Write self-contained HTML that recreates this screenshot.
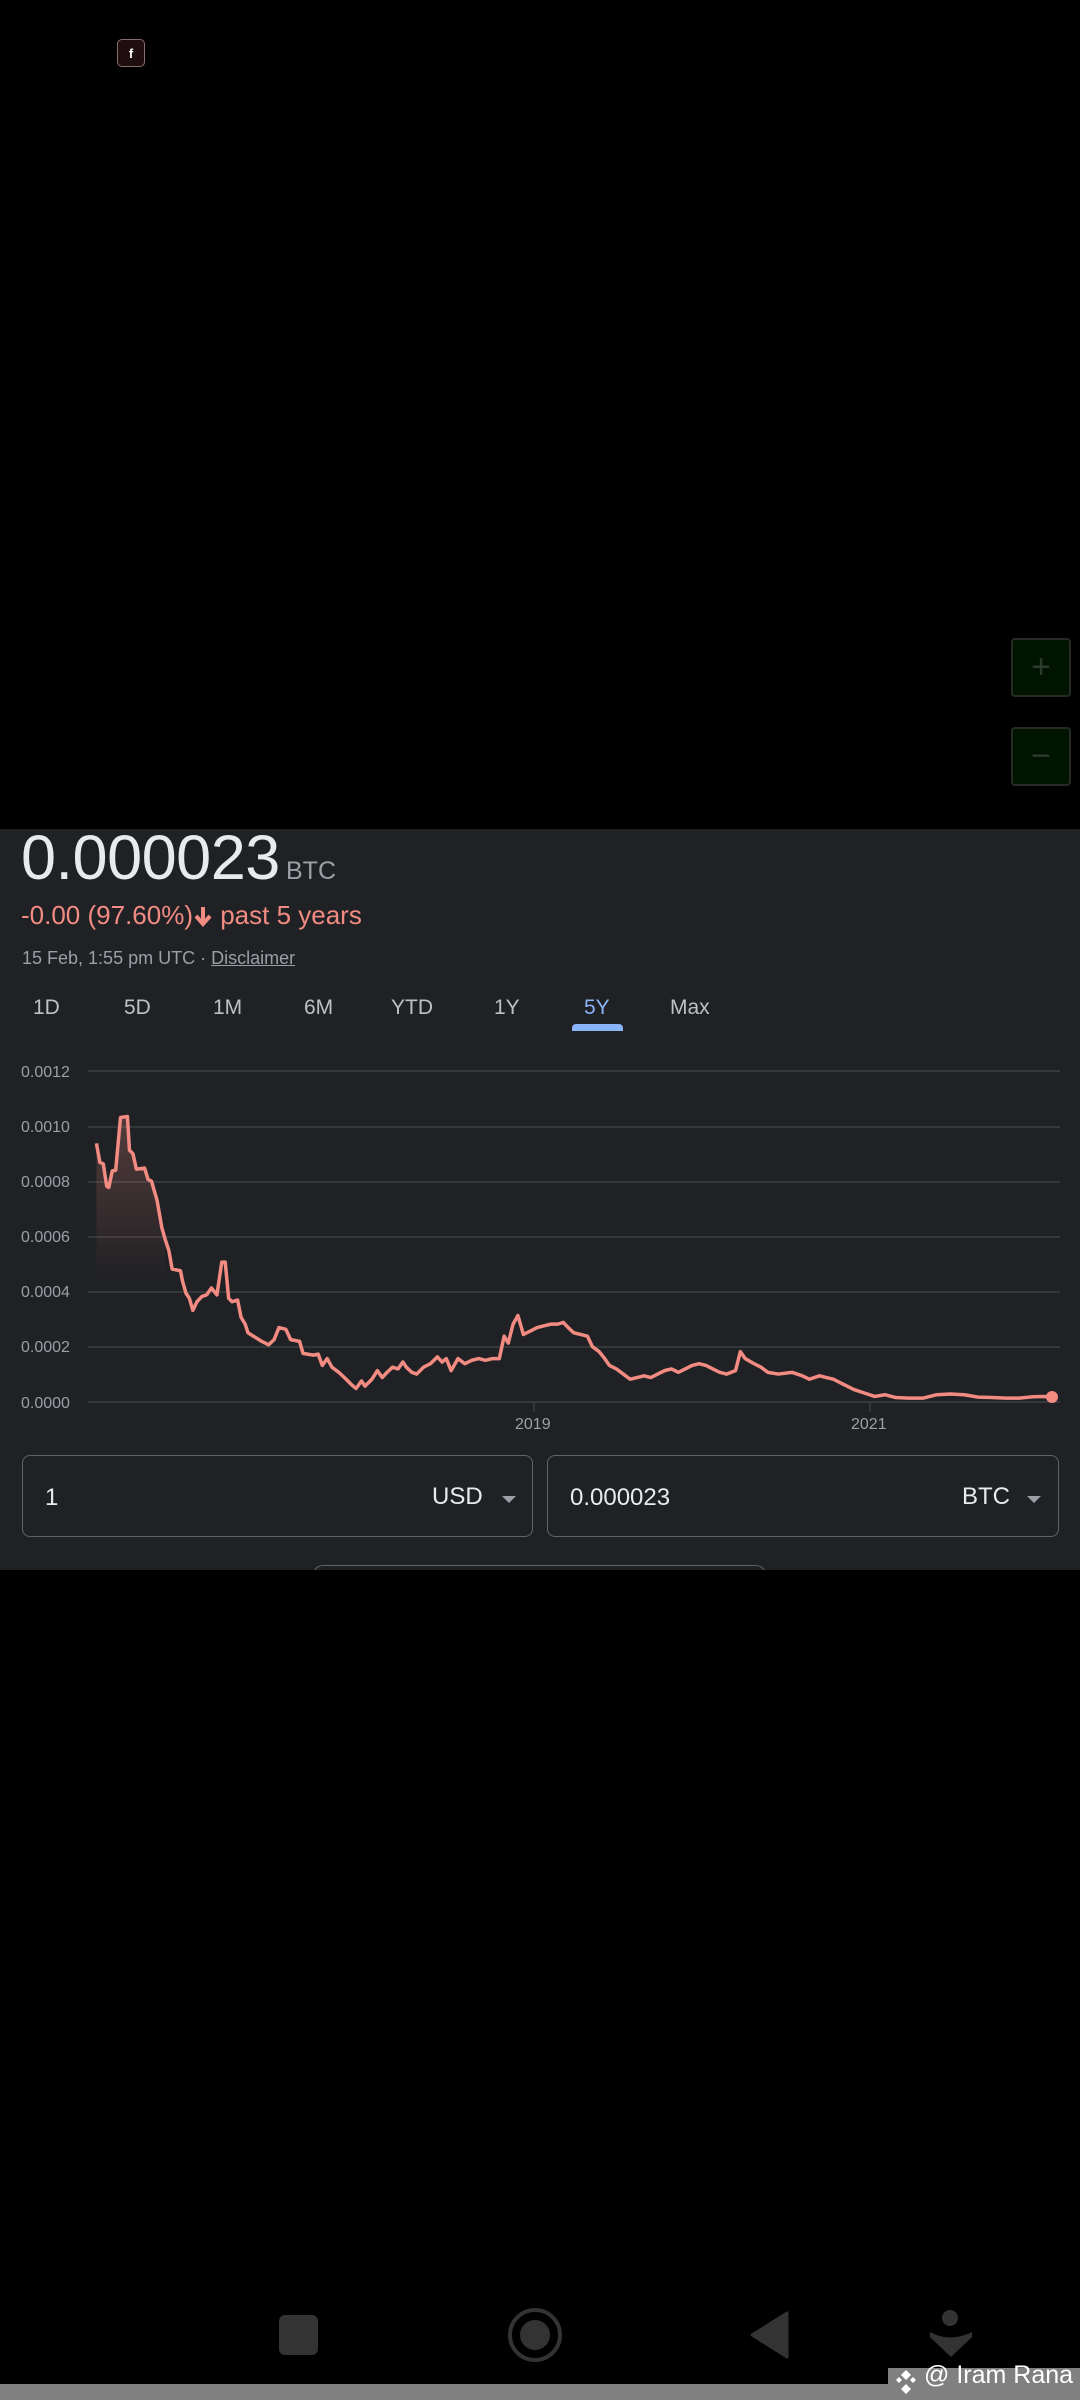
<!DOCTYPE html>
<html><head><meta charset="utf-8"><style>
html,body{margin:0;padding:0;background:#000;width:1080px;height:2400px;overflow:hidden;font-family:"Liberation Sans",Arial,sans-serif}
.a{position:absolute;white-space:nowrap}
.panel{position:absolute;left:0;top:829px;width:1080px;height:741px;background:#202124}
.tab{position:absolute;top:996px;font-size:21px;color:#bdc1c6}
.lbl{position:absolute;left:21px;font-size:16px;color:#9aa0a6}
.box{position:absolute;top:1455px;height:82px;border:1.5px solid #5f6368;border-radius:8px;box-sizing:border-box}
</style></head><body>
<div class="a" style="left:117px;top:39px;width:26px;height:26px;border:1.5px solid #8a6a6a;border-radius:5px;background:#1e0e10;color:#fff;font-size:13px;font-weight:bold;text-align:center;line-height:27px">f</div>
<div class="a" style="left:1011px;top:638px;width:60px;height:59px;border:2px solid #262b26;border-radius:4px;background:#001400;box-sizing:border-box;color:#2f3a2f;font-size:34px;text-align:center;line-height:54px">+</div>
<div class="a" style="left:1011px;top:727px;width:60px;height:59px;border:2px solid #262b26;border-radius:4px;background:#001400;box-sizing:border-box;color:#2f3a2f;font-size:34px;text-align:center;line-height:54px">−</div>

<div class="panel"></div>
<div class="a" style="left:21px;top:822px;font-size:63px;color:#e8eaed;letter-spacing:-0.5px">0.000023</div>
<div class="a" style="left:286px;top:857px;font-size:25px;color:#9aa0a6">BTC</div>
<div class="a" style="left:21px;top:900px;font-size:26px;color:#f28b82">-0.00 (97.60%)<svg width="20" height="22" viewBox="0 0 20 22" style="vertical-align:-3px"><path d="M10 2 V18 M3 11 L10 19 L17 11" fill="none" stroke="#f28b82" stroke-width="4"/></svg> past 5 years</div>
<div class="a" style="left:22px;top:948px;font-size:18px;color:#9aa0a6">15 Feb, 1:55 pm UTC · <span style="text-decoration:underline">Disclaimer</span></div>
<div class="tab" style="left:33px">1D</div>
<div class="tab" style="left:124px">5D</div>
<div class="tab" style="left:213px">1M</div>
<div class="tab" style="left:304px">6M</div>
<div class="tab" style="left:391px">YTD</div>
<div class="tab" style="left:494px">1Y</div>
<div class="tab" style="left:584px;color:#8ab4f8">5Y</div>
<div class="tab" style="left:670px">Max</div>
<div class="a" style="left:572px;top:1024px;width:51px;height:7px;background:#8ab4f8;border-radius:4px 4px 0 0"></div>

<div class="lbl" style="top:1064px">0.0012</div>
<div class="lbl" style="top:1119px">0.0010</div>
<div class="lbl" style="top:1174px">0.0008</div>
<div class="lbl" style="top:1229px">0.0006</div>
<div class="lbl" style="top:1284px">0.0004</div>
<div class="lbl" style="top:1339px">0.0002</div>
<div class="lbl" style="top:1395px">0.0000</div>
<div class="lbl" style="left:515px;top:1416px">2019</div>
<div class="lbl" style="left:851px;top:1416px">2021</div>

<svg class="a" style="left:0;top:0" width="1080" height="2400">
<defs><linearGradient id="g" x1="0" y1="0" x2="0" y2="1"><stop offset="0" stop-color="#f28b82" stop-opacity="0.25"/><stop offset="1" stop-color="#f28b82" stop-opacity="0"/></linearGradient></defs>
<g stroke="#3c4043" stroke-width="1.5">
<line x1="88" y1="1071" x2="1060" y2="1071"/><line x1="88" y1="1127" x2="1060" y2="1127"/><line x1="88" y1="1182" x2="1060" y2="1182"/><line x1="88" y1="1237" x2="1060" y2="1237"/><line x1="88" y1="1292" x2="1060" y2="1292"/><line x1="88" y1="1347" x2="1060" y2="1347"/><line x1="88" y1="1402" x2="1060" y2="1402"/>
<line x1="534" y1="1402" x2="534" y2="1412"/><line x1="870" y1="1402" x2="870" y2="1412"/>
</g>
<g transform="translate(0,1040) scale(0.6887,0.3444)">
<polygon fill="url(#g)" points="140,300 145,355 150,360 155,425 158,428 163,380 168,378 172,290 175,225 185,222 188,320 193,330 198,375 210,372 215,405 220,410 228,465 235,545 240,580 240,700 140,700"/>
<polyline fill="none" stroke="#f28b82" stroke-width="3.5" vector-effect="non-scaling-stroke" stroke-linejoin="round" points="140,300 145,355 150,360 155,425 158,428 163,380 168,378 172,290 175,225 185,222 188,320 193,330 198,375 210,372 215,405 220,410 228,465 235,545 240,580 245,610 250,665 262,670 265,700 270,735 275,750 280,785 286,760 293,745 300,740 307,720 315,740 322,645 327,645 332,750 337,760 345,755 350,805 356,825 360,850 372,865 380,875 390,885 398,870 405,835 415,840 422,870 435,875 440,910 455,915 462,912 468,945 475,925 482,950 492,965 500,980 510,1000 517,1012 525,990 530,1005 540,985 548,960 555,980 562,965 570,950 578,955 585,935 590,950 598,965 605,970 615,950 625,940 635,920 642,935 648,925 655,960 665,925 675,940 685,930 695,925 705,930 715,925 725,925 732,860 738,880 745,825 752,800 760,855 770,845 780,835 790,830 800,825 810,825 818,820 825,835 833,850 843,855 853,860 860,890 870,905 878,925 885,945 895,955 905,970 915,985 925,980 935,975 945,980 955,970 965,960 975,955 985,965 995,955 1005,945 1015,940 1025,945 1035,955 1045,965 1055,970 1068,960 1075,905 1082,925 1095,940 1105,950 1115,965 1130,970 1150,965 1165,975 1175,985 1190,975 1200,980 1210,985 1225,1000 1240,1015 1255,1025 1270,1035 1285,1030 1300,1038 1320,1040 1340,1040 1360,1030 1380,1028 1400,1030 1420,1037 1440,1038 1460,1040 1480,1040 1500,1036 1515,1035 1528,1036"/>
</g>
<circle cx="1052" cy="1397" r="6" fill="#f28b82"/>
<rect x="279" y="2315" width="39" height="40" rx="6" fill="#333"/>
<circle cx="535" cy="2335" r="25" fill="none" stroke="#333" stroke-width="4"/>
<circle cx="535" cy="2335" r="15" fill="#333"/>
<path d="M787 2313 L787 2357 L752 2335 Z" fill="#333" stroke="#333" stroke-width="3" stroke-linejoin="round"/>
<circle cx="950" cy="2318" r="8" fill="#333"/>
<path d="M930 2332 Q950 2343 972 2332 L972 2337 L951 2357 L930 2337 Z" fill="#333"/>
<rect x="0" y="2384" width="1080" height="16" fill="#808080"/>
<rect x="888" y="2368" width="192" height="16" fill="#808080"/>
<g fill="#fff"><path d="M906 2370 l5 5 -5 5 -5 -5z"/><path d="M899 2377 l3 3 -3 3 -3 -3z"/><path d="M913 2377 l3 3 -3 3 -3 -3z"/><path d="M906 2384 l5 5 -5 5 -5 -5z"/></g>
</svg>
<div class="box" style="left:22px;width:511px"></div>
<div class="box" style="left:547px;width:512px"></div>
<div class="a" style="left:45px;top:1484px;font-size:24px;color:#e8eaed">1</div>
<div class="a" style="left:432px;top:1483px;font-size:24px;color:#e8eaed">USD</div>
<div class="a" style="left:502px;top:1496px;width:0;height:0;border-left:7px solid transparent;border-right:7px solid transparent;border-top:7px solid #9aa0a6"></div>
<div class="a" style="left:570px;top:1484px;font-size:24px;color:#e8eaed">0.000023</div>
<div class="a" style="left:962px;top:1483px;font-size:24px;color:#e8eaed">BTC</div>
<div class="a" style="left:1027px;top:1496px;width:0;height:0;border-left:7px solid transparent;border-right:7px solid transparent;border-top:7px solid #9aa0a6"></div>
<div class="a" style="left:313px;top:1565px;width:453px;height:10px;border:1.5px solid #5f6368;border-bottom:none;border-radius:10px 10px 0 0;box-sizing:border-box"></div>
<div class="a" style="left:0;top:1570px;width:1080px;height:10px;background:#000"></div>
<div class="a" style="left:924px;top:2361px;font-size:25px;color:#fff">@ Iram Rana</div>
</body></html>
